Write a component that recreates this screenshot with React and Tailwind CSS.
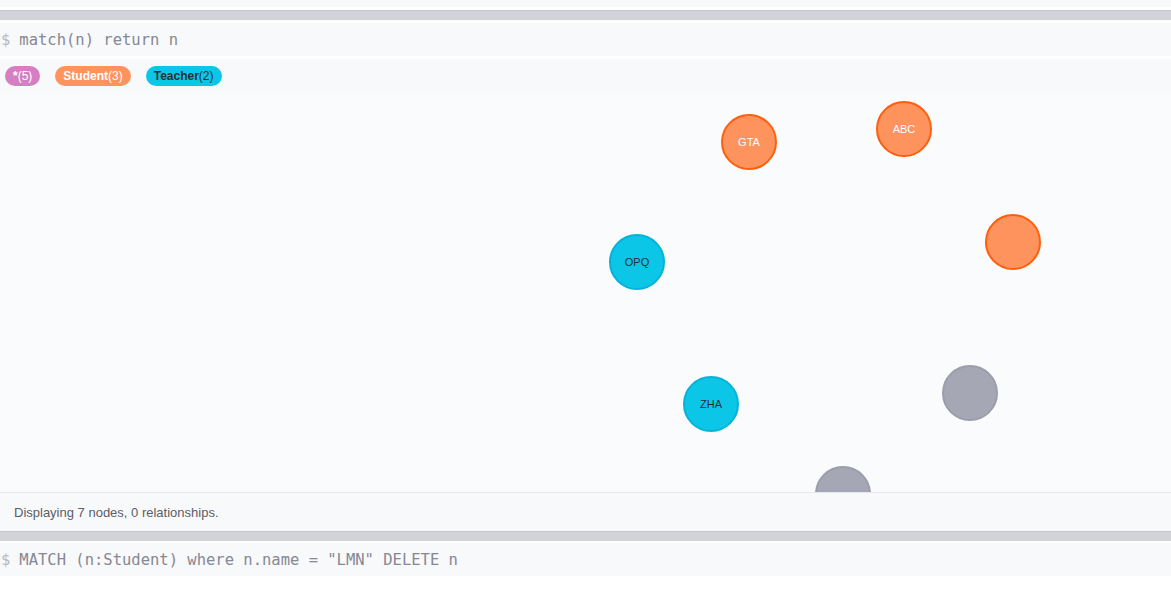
import React from 'react';

const nodes = [
  { x: 749, y: 50, label: 'GTA', type: 'student' },
  { x: 904, y: 37, label: 'ABC', type: 'student' },
  { x: 1013, y: 150, label: '', type: 'student' },
  { x: 637, y: 170, label: 'OPQ', type: 'teacher' },
  { x: 711, y: 312, label: 'ZHA', type: 'teacher' },
  { x: 970, y: 301, label: '', type: 'other' },
  { x: 843, y: 402, label: '', type: 'other' },
];

const styles = {
  student: { fill: '#fe935d', stroke: '#fd5f0d', text: '#ffffff' },
  teacher: { fill: '#0bc6e6', stroke: '#07b2d8', text: '#2a2c34' },
  other: { fill: '#a5a7b4', stroke: '#9b9dab', text: '#2a2c34' },
};

function Editor({ query }) {
  return (
    <div className="h-[33px] bg-[#f8f9fb] flex items-center pt-[2px] px-[1px] font-['DejaVu_Sans_Mono',monospace] text-[15.5px] text-[#868893]">
      <span className="text-[#b7b9c2] mr-[9px]">$</span>
      <span>{query}</span>
    </div>
  );
}

function Pill({ name, count, className }) {
  return (
    <span className={`h-[20px] rounded-full flex items-center text-[12px] ${className}`}>
      <span className="font-bold">{name}</span>
      <span>({count})</span>
    </span>
  );
}

export default function App() {
  return (
    <div className="w-[1171px] h-[589px] bg-white overflow-hidden font-['Liberation_Sans',Arial,sans-serif]">
      <div className="h-[7px] bg-[#f8f9fb]" />
      <div className="h-[3px]" />
      <div className="h-[10px] bg-[#d2d3d8] border-t border-[#c5c6cc]" />
      <div className="h-[3px]" />
      <Editor query="match(n) return n" />
      <div className="h-[3px]" />
      <div className="bg-[#fafbfc]">
        <div className="h-[33px] bg-[#f8f9fb] flex items-center gap-[15px] pl-[5px]">
          <Pill name="*" count={5} className="bg-[#d57fc2] text-white px-[8px]" />
          <Pill name="Student" count={3} className="bg-[#fe935d] text-white px-[8px]" />
          <Pill name="Teacher" count={2} className="bg-[#0bc6e6] text-[#2a2c34] px-[8px]" />
        </div>
        <svg width="1171" height="400" className="block">
          {nodes.map((n, i) => {
            const s = styles[n.type];
            return (
              <g key={i}>
                <circle cx={n.x} cy={n.y} r="27" fill={s.fill} stroke={s.stroke} strokeWidth="2" />
                {n.label && (
                  <text
                    x={n.x}
                    y={n.y + 4}
                    textAnchor="middle"
                    fontSize="11"
                    fontFamily="Liberation Sans, Arial, sans-serif"
                    fill={s.text}
                  >
                    {n.label}
                  </text>
                )}
              </g>
            );
          })}
        </svg>
      </div>
      <div className="h-[39px] bg-[#f8f9fb] border-t border-[#e6e7ec] flex items-center pt-[2px] pl-[14px] text-[13px] text-[#5b5d66]">
        Displaying 7 nodes, 0 relationships.
      </div>
      <div className="h-[10px] bg-[#d2d3d8] border-t border-[#c5c6cc]" />
      <div className="h-[2px]" />
      <Editor query={'MATCH (n:Student) where n.name = "LMN" DELETE n'} />
    </div>
  );
}
